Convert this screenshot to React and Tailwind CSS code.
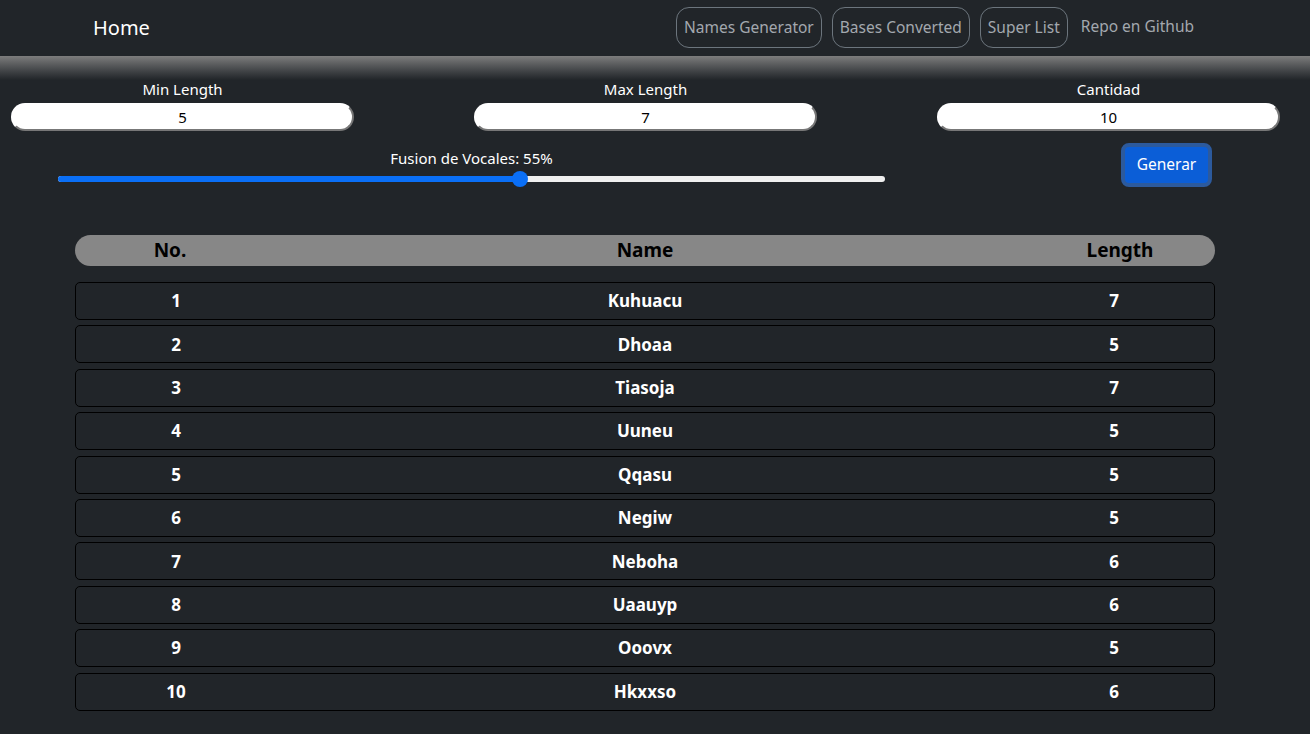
import React from "react";

const rows = [
  [1, "Kuhuacu", 7],
  [2, "Dhoaa", 5],
  [3, "Tiasoja", 7],
  [4, "Uuneu", 5],
  [5, "Qqasu", 5],
  [6, "Negiw", 5],
  [7, "Neboha", 6],
  [8, "Uaauyp", 6],
  [9, "Ooovx", 5],
  [10, "Hkxxso", 6],
];

function Field({ label, value }) {
  return (
    <div className="flex w-[343px] flex-col items-center">
      <div className="h-[18px] text-[15px] leading-[18px] text-white">{label}</div>
      <div className="mt-[5px] flex h-[28px] w-full items-center justify-center rounded-full border-2 border-t-white border-l-white border-b-[#777] border-r-[#777] bg-white text-[15px] text-black">
        {value}
      </div>
    </div>
  );
}

export default function App() {
  return (
    <div
      className="min-h-[734px] w-full bg-[#212529] text-white"
      style={{ fontFamily: '"Noto Sans", "Open Sans", sans-serif' }}
    >
      <nav className="flex h-[56px] items-center justify-between pb-[1px] pl-[93px] pr-[116px]">
        <div className="text-[20px] leading-none text-white">Home</div>
        <div className="flex items-center gap-[10px]">
          <div className="flex h-[41px] items-center rounded-[13px] border border-[#6c757d] px-[7px] text-[15.5px] text-[#a3a8ae]">
            Names Generator
          </div>
          <div className="flex h-[41px] items-center rounded-[13px] border border-[#6c757d] px-[7px] text-[15.5px] text-[#a3a8ae]">
            Bases Converted
          </div>
          <div className="flex h-[41px] items-center rounded-[13px] border border-[#6c757d] px-[7px] text-[15.5px] text-[#a3a8ae]">
            Super List
          </div>
          <div className="ml-[3px] flex h-[41px] items-center pb-[2px] text-[15.5px] text-[#a3a8ae]">
            Repo en Github
          </div>
        </div>
      </nav>
      <div className="h-[24px] bg-gradient-to-b from-[#7d7d7d] to-[#212529]" />
      <div className="flex gap-[120px] pl-[11px]">
        <Field label="Min Length" value="5" />
        <Field label="Max Length" value="7" />
        <Field label="Cantidad" value="10" />
      </div>
      <div className="mt-[18px] flex items-start">
        <div className="ml-[58px] flex w-[827px] flex-col items-center">
          <div className="h-[19px] text-[15px] leading-[19px] text-white">Fusion de Vocales: 55%</div>
          <div className="relative mt-[3px] h-[16px] w-full">
            <div className="absolute left-0 right-0 top-[5px] h-[6px] rounded-full bg-[#efefef]" />
            <div className="absolute left-0 top-[5px] h-[6px] w-[462px] rounded-full bg-[#0a6ff6]" />
            <div className="absolute left-[454px] top-0 h-[16px] w-[16px] rounded-full bg-[#0a6ff6]" />
          </div>
        </div>
        <div className="ml-[236px] mt-[-6px] flex h-[44px] w-[91px] items-center justify-center rounded-[8px] border-[4px] border-[#2c5a9d] bg-[#0b5ed7] text-[15.5px] text-white">
          Generar
        </div>
      </div>
      <div className="mx-[75px] mt-[48px] w-[1140px]">
        <div className="grid h-[31px] grid-cols-[190px_1fr_190px] items-center rounded-full bg-[#878787] text-[19px] font-bold text-black">
          <div className="text-center">No.</div>
          <div className="text-center">Name</div>
          <div className="text-center">Length</div>
        </div>
        <div className="mt-[16px] flex flex-col gap-[5.4px]">
          {rows.map(([n, name, len]) => (
            <div
              key={n}
              className="grid h-[38px] grid-cols-[200px_1fr_200px] items-center rounded-[5px] border border-black text-[17px] font-bold text-white"
            >
              <div className="text-center">{n}</div>
              <div className="text-center">{name}</div>
              <div className="text-center">{len}</div>
            </div>
          ))}
        </div>
      </div>
    </div>
  );
}
